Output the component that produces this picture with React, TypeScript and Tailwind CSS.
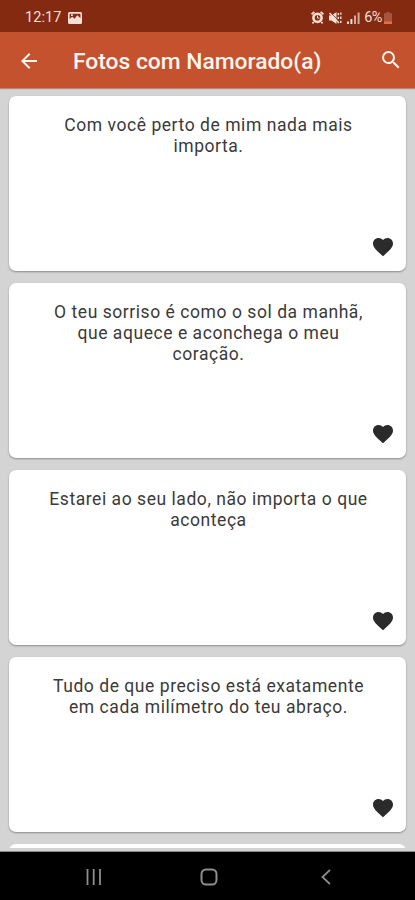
import { MdArrowBack, MdFavorite, MdSearch } from 'react-icons/md';

const messages = [
  'Com você perto de mim nada mais importa.',
  'O teu sorriso é como o sol da manhã, que aquece e aconchega o meu coração.',
  'Estarei ao seu lado, não importa o que aconteça',
  'Tudo de que preciso está exatamente em cada milímetro do teu abraço.',
];

const StatusBar = () => (
  <div className="flex h-8 shrink-0 items-center bg-[#842a11] pt-[3px] pr-[23px] pl-[25px] text-[#f6dfd8]">
    <span className="pt-0.5 text-[14.5px] leading-none tracking-[0.1px]">12:17</span>
    <svg viewBox="0 0 14 12" className="ml-[6px] h-3 w-3.5" fill="currentColor">
      <path
        fillRule="evenodd"
        d="M1.5 0h11A1.5 1.5 0 0 1 14 1.5v9a1.5 1.5 0 0 1-1.5 1.5h-11A1.5 1.5 0 0 1 0 10.5v-9A1.5 1.5 0 0 1 1.5 0ZM1.6 1.8V7l2.6-2.2 2.2 1.9 3-3.4 3 3V1.8ZM3 2.3h1.8V4H3Z"
      />
    </svg>

    <div className="ml-auto flex items-center">
      {/* alarm */}
      <svg viewBox="0 0 13 13" className="h-[13px] w-[13px]" fill="none" stroke="currentColor">
        <circle cx="6.5" cy="6.8" r="4.1" strokeWidth="2.6" />
        <path d="M.6 3.2 3.4.9M12.4 3.2 9.6.9M2.7 11l-1.3 1.4M10.3 11l1.3 1.4" strokeWidth="1.8" />
        <path d="M6.5 4.5v2.6h2" strokeWidth="1" />
      </svg>
      {/* vibrate / muted */}
      <svg viewBox="0 0 13 12" className="ml-[5px] h-3 w-[13px]" fill="currentColor">
        <path d="M0 3.5h2.5L7.5 0v12L2.5 8.5H0Z" />
        <path d="M1.3.3 11 10.3" stroke="#842a11" strokeWidth="1" />
        <path
          d="M.5 1 10 11M9.3 1v2.2M9.3 4.8V7M11.8.5v2.2M11.8 4.5V7M11.8 8.8V11"
          fill="none"
          stroke="currentColor"
          strokeWidth="1.4"
        />
      </svg>
      {/* signal */}
      <svg viewBox="0 0 13 12" className="ml-[5px] h-3 w-[13px]" fill="currentColor">
        <path d="M0 9.5h2V12H0ZM3.4 7h2v5h-2Z" />
        <path d="M7 3.5h2V12H7ZM10.6.5h2V12h-2Z" opacity=".7" />
      </svg>
      <span className="ml-1 pt-0.5 text-[14.5px] leading-none tracking-[-0.5px]">6%</span>
      {/* battery */}
      <svg viewBox="0 0 8 12" className="ml-0.5 h-3 w-2">
        <path d="M2.5 0h3v1.3H8V12H0V1.3h2.5Z" fill="#a5563e" />
        <path d="M0 9.5h8V12H0Z" fill="#ef6847" />
      </svg>
    </div>
  </div>
);

const AppBar = () => (
  <header className="z-10 flex h-[56px] shrink-0 items-center bg-[#c4522e] pt-0.5 pr-3 pl-[17px] text-[#fff4ee] shadow-[0_1px_1px_rgba(150,60,35,0.5)]">
    <MdArrowBack size={24} />
    <h1 className="ml-8 pt-0.5 text-[22.8px] leading-none font-medium whitespace-nowrap">
      Fotos com Namorado(a)
    </h1>
    <MdSearch size={24} className="mb-0.5 ml-auto" />
  </header>
);

const MessageCard = ({ text }: { text: string }) => (
  <article className="flex h-[175px] shrink-0 flex-col justify-between rounded-[7px] bg-white shadow-[0_1px_2px_rgba(0,0,0,0.35)]">
    <p className="pt-[19px] pr-[35px] pl-[37px] text-center text-[17.5px] leading-[20.8px] tracking-[0.55px] text-[#3a3a3a]">
      {text}
    </p>
    <MdFavorite size={24} className="mr-[11.5px] mb-3 self-end text-[#2b2b2b]" />
  </article>
);

const NavigationBar = () => (
  <nav className="flex h-12 shrink-0 items-center bg-black pt-0.5 text-[#8e8e8e]">
    <svg viewBox="0 0 16 16" className="ml-[86px] h-4 w-4" stroke="currentColor" strokeWidth="1.8">
      <path d="M1.5 0v16M7.7 0v16M14 0v16" />
    </svg>
    <svg viewBox="0 0 18 18" className="ml-[98px] h-[18px] w-[18px]" fill="none" stroke="currentColor" strokeWidth="2">
      <rect x="1.5" y="1.5" width="15" height="15" rx="4.5" />
    </svg>
    <svg viewBox="0 0 10 16" className="ml-[103px] h-4 w-2.5" fill="none" stroke="currentColor" strokeWidth="1.8">
      <path d="M9 .8 1.5 8 9 15.2" />
    </svg>
  </nav>
);

const App = () => (
  <div className="flex h-[900px] w-[415px] flex-col overflow-hidden bg-[#d4d4d4] font-['Roboto',sans-serif]">
    <StatusBar />
    <AppBar />
    <main className="flex h-[760px] shrink-0 flex-col gap-3 overflow-hidden px-[9px] pt-2">
      {messages.map((message) => (
        <MessageCard key={message} text={message} />
      ))}
      <div className="h-[175px] shrink-0 rounded-[7px] bg-white" />
    </main>
    <div className="h-1 shrink-0 border-b border-[#8a8a8a] bg-[#d4d4d4]" />
    <NavigationBar />
  </div>
);

export default App;
